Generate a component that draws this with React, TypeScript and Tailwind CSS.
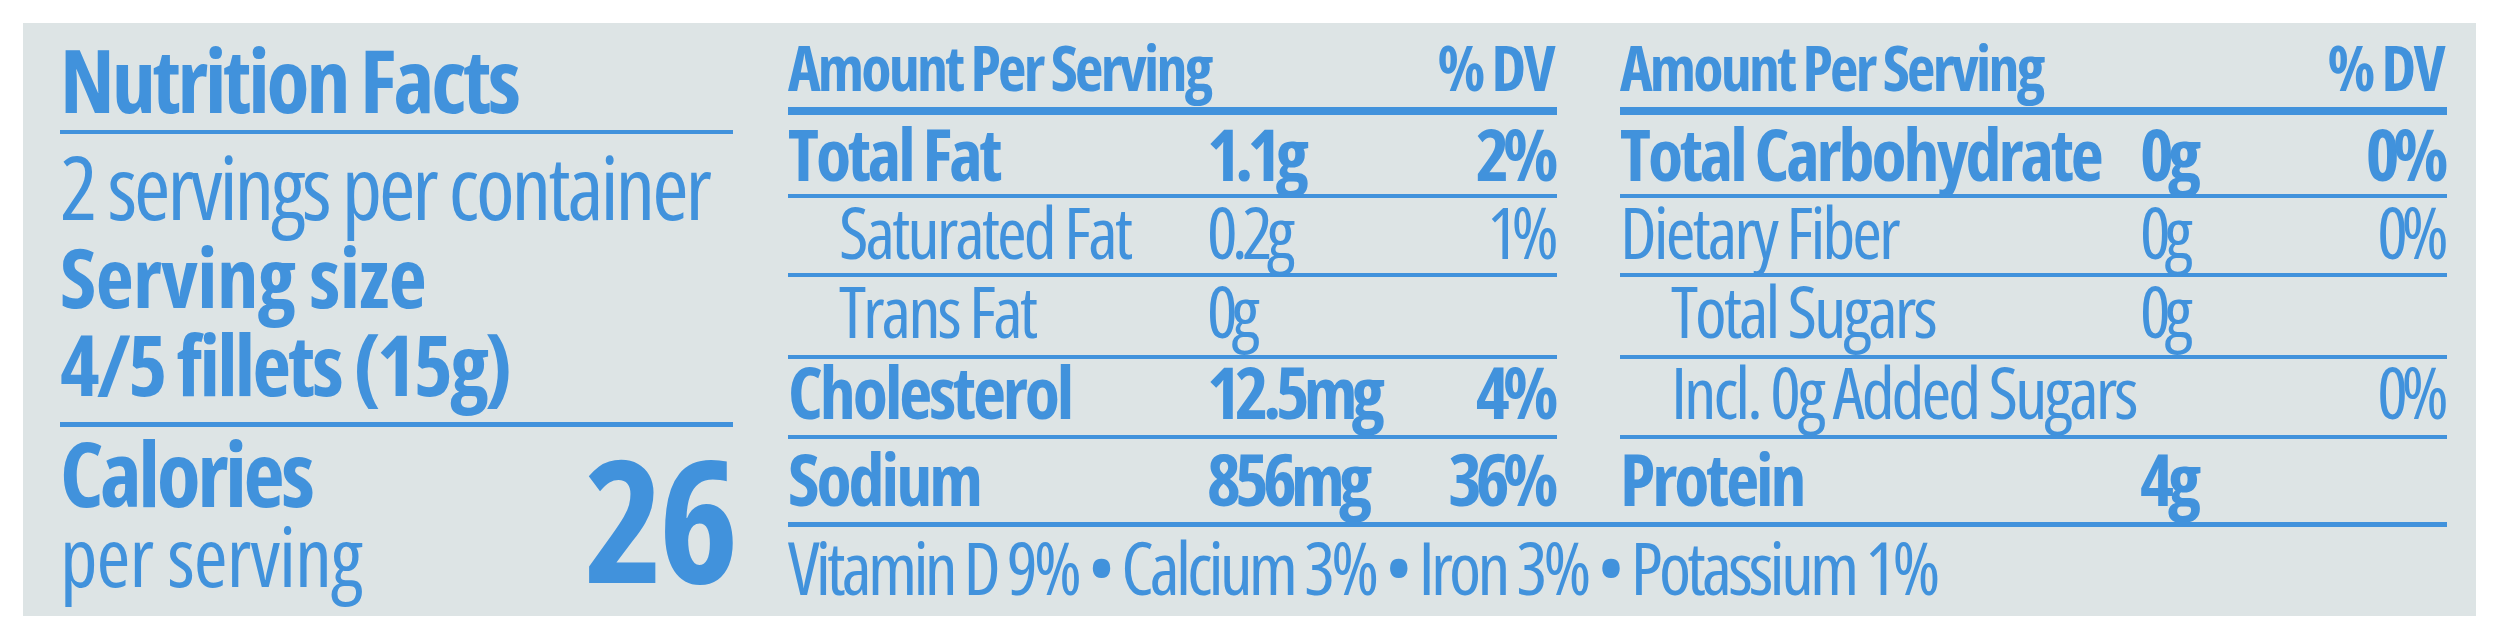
const leftRows = [
  { name: "Total Fat", amount: "1.1g", dv: "2%", bold: true, indent: false },
  { name: "Saturated Fat", amount: "0.2g", dv: "1%", bold: false, indent: true },
  { name: "Trans Fat", amount: "0g", dv: "", bold: false, indent: true },
  { name: "Cholesterol", amount: "12.5mg", dv: "4%", bold: true, indent: false },
  { name: "Sodium", amount: "856mg", dv: "36%", bold: true, indent: false },
];

const rightRows = [
  { name: "Total Carbohydrate", amount: "0g", dv: "0%", bold: true, indent: false },
  { name: "Dietary Fiber", amount: "0g", dv: "0%", bold: false, indent: false },
  { name: "Total Sugars", amount: "0g", dv: "", bold: false, indent: true },
  { name: "Incl. 0g Added Sugars", amount: "", dv: "0%", bold: false, indent: true },
  { name: "Protein", amount: "4g", dv: "", bold: true, indent: false },
];

// row box heights (incl. bottom rule) and text offsets, top to bottom
const rowBox = [
  "h-[83px] pt-[6px] border-b-4",
  "h-[79px] pt-[1px] border-b-4",
  "h-[82px] pt-[1px] border-b-4",
  "h-[80px] pt-0 border-b-4",
  "h-[83px] pt-[7px]",
];

type Row = { name: string; amount: string; dv: string; bold: boolean; indent: boolean };

const NutrientColumn = ({ rows, nameCol }: { rows: Row[]; nameCol: string }) => {
  return (
    <div className="flex flex-col">
      <div className="flex justify-between pt-[13px] text-[62px] leading-none font-bold">
        <span className="tracking-[-0.045em]">Amount Per Serving</span>
        <span className="mr-[4px] tracking-[-0.04em]">% DV</span>
      </div>
      <div className="mt-[9px] h-[8px] bg-[#4192dc]" />
      {rows.map((row, i) => (
        <div
          key={row.name}
          className={`grid ${nameCol} border-[#4192dc] text-[72px] leading-[64px] ${rowBox[i]} ${
            row.bold ? "font-bold" : "font-normal"
          }`}
        >
          <span className={`whitespace-nowrap tracking-[-0.042em] ${row.indent ? "pl-[51px]" : ""}`}>
            {row.name}
          </span>
          <span className="tracking-[-0.08em]">{row.amount}</span>
          <span className="mr-[5px] text-right tracking-[-0.09em]">{row.dv}</span>
        </div>
      ))}
    </div>
  );
};

export default function App() {
  return (
    <div className="w-[2500px] h-[640px] bg-white pl-[23px] pt-[23px] font-['Open_Sans',sans-serif] [font-stretch:75%] text-[#4192dc]">
      <div className="flex w-[2453px] h-[593px] bg-[#dde4e5] pl-[37px]">
        {/* left: title, servings, calories */}
        <div className="flex flex-col w-[673px] pt-[12px]">
          <h1 className="text-[88px] leading-none font-bold whitespace-nowrap tracking-[-0.035em]">
            Nutrition Facts
          </h1>
          <div className="mt-[7px] h-[4px] bg-[#4192dc]" />
          <p className="mt-[8px] text-[88px] leading-none whitespace-nowrap tracking-[-0.035em]">
            2 servings per container
          </p>
          <p className="mt-[4px] text-[83px] leading-none font-bold tracking-[-0.008em]">Serving size</p>
          <p className="mt-[5px] text-[84px] leading-none font-bold whitespace-nowrap tracking-[-0.032em]">
            4/5 fillets (15g)
          </p>
          <div className="mt-[16px] h-[5px] bg-[#4192dc]" />
          <div className="flex justify-between items-start">
            <div className="flex flex-col">
              <span className="text-[90px] leading-none font-bold tracking-[-0.038em]">Calories</span>
              <span className="-mt-[3px] text-[82px] leading-none tracking-[-0.012em]">per serving</span>
            </div>
            <span className="mt-[5px] text-[170px] leading-none font-bold tracking-[-0.032em]">26</span>
          </div>
        </div>

        {/* middle + right nutrient tables */}
        <div className="flex flex-col ml-[55px] w-[1659px]">
          <div className="flex gap-[63px]">
            <div className="w-[769px]">
              <NutrientColumn rows={leftRows} nameCol="grid-cols-[419px_1fr_auto]" />
            </div>
            <div className="w-[827px]">
              <NutrientColumn rows={rightRows} nameCol="grid-cols-[520px_1fr_auto]" />
            </div>
          </div>
          <div className="h-[5px] bg-[#4192dc]" />
          <p className="mt-[3px] text-[73px] leading-none whitespace-nowrap tracking-[-0.052em]">
            Vitamin D 9% • Calcium 3% • Iron 3% • Potassium 1%
          </p>
        </div>
      </div>
    </div>
  );
}
